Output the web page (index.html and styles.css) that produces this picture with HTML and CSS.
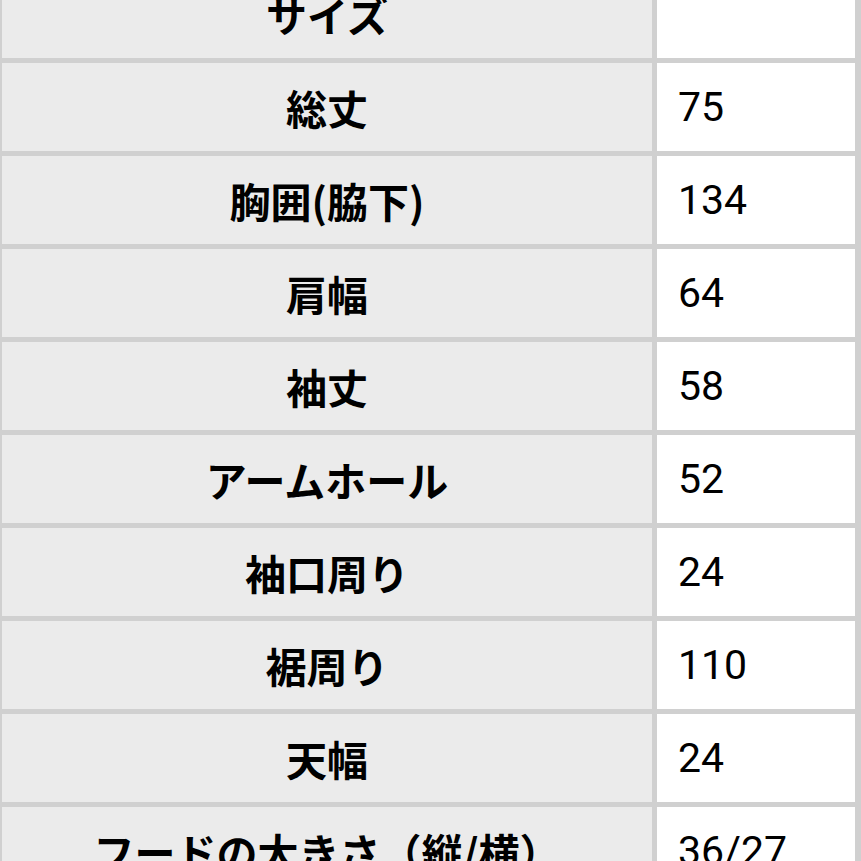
FILE: index.html
```html
<!DOCTYPE html>
<html lang="ja">
<head>
<meta charset="utf-8">
<link rel="stylesheet" href="styles.css">
</head>
<body>
<div class="table">
  <div class="th">サイズ</div><div class="td"></div>
  <div class="th">総丈</div><div class="td">75</div>
  <div class="th">胸囲(脇下)</div><div class="td">134</div>
  <div class="th">肩幅</div><div class="td">64</div>
  <div class="th">袖丈</div><div class="td">58</div>
  <div class="th">アームホール</div><div class="td">52</div>
  <div class="th">袖口周り</div><div class="td">24</div>
  <div class="th">裾周り</div><div class="td">110</div>
  <div class="th">天幅</div><div class="td">24</div>
  <div class="th">フードの大きさ（縦/横）</div><div class="td">36/27</div>
</div>
</body>
</html>
```
FILE: styles.css
```css
html, body {
  margin: 0;
  padding: 0;
  background: #ffffff;
  overflow: hidden;
}
.table {
  margin-top: -30px;
  display: grid;
  grid-template-columns: 650px 198px;
  grid-auto-rows: 88px;
  gap: 5px;
  padding: 0 6px 0 2px;
  background: #d0d0d0;
  font-family: Roboto, "Noto Sans CJK JP", sans-serif;
  font-size: 40px;
  color: #000000;
}
.th {
  background: #ebebeb;
  font-weight: 700;
  font-family: "Noto Sans CJK JP", sans-serif;
  font-size: 41px;
  display: flex;
  align-items: center;
  justify-content: center;
}
.td {
  background: #ffffff;
  display: flex;
  align-items: center;
  padding-left: 21px;
  font-size: 41px;
}
```
